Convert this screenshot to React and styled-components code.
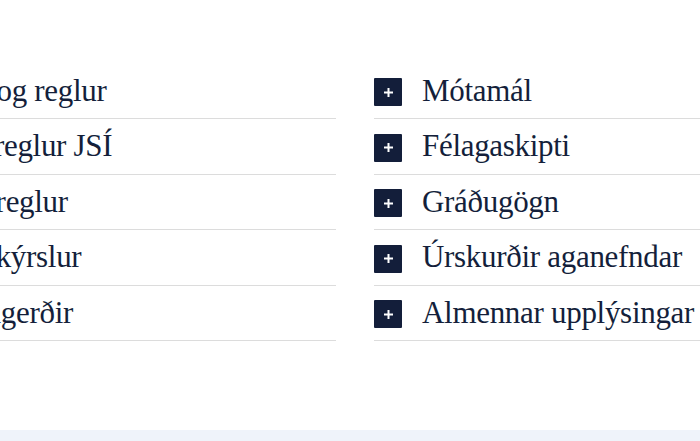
import styled, { createGlobalStyle } from 'styled-components';

const GlobalStyle = createGlobalStyle`
  html, body {
    margin: 0;
    padding: 0;
    background: #ffffff;
    overflow: hidden;
  }
  body {
    font-family: "Liberation Serif", "Times New Roman", serif;
  }
`;

const leftItems = ['Lög og reglur', 'Siðareglur JSÍ', 'Gólfreglur', 'Ársskýrslur', 'Lagagerðir'];
const rightItems = ['Mótamál', 'Félagaskipti', 'Gráðugögn', 'Úrskurðir aganefndar', 'Almennar upplýsingar'];

export default function App() {
  return (
    <>
      <GlobalStyle />
      <Page>
        <Section>
          <Columns>
            <Column items={leftItems} />
            <Column items={rightItems} />
          </Columns>
        </Section>
        <Footer />
      </Page>
    </>
  );
}

function Column({ items }) {
  return (
    <List>
      {items.map((label) => (
        <Row key={label}>
          <Toggle aria-label="Opna">
            <svg width="11" height="11" viewBox="0 0 11 11">
              <path d="M5.5 1v9M1 5.5h9" stroke="#ffffff" strokeWidth="2" />
            </svg>
          </Toggle>
          <Label>{label}</Label>
        </Row>
      ))}
    </List>
  );
}

const Page = styled.div`
  width: 700px;
  height: 441px;
  display: flex;
  flex-direction: column;
  overflow: hidden;
`;

const Section = styled.section`
  flex: 1;
  padding-top: 63.5px;
`;

// the two columns are wider than the window, so the left one starts off-screen
const Columns = styled.div`
  display: grid;
  grid-template-columns: 444px 444px;
  column-gap: 38px;
  margin-left: -108px;
  width: 926px;
`;

const List = styled.div`
  display: flex;
  flex-direction: column;
`;

const Row = styled.div`
  display: flex;
  align-items: flex-start;
  gap: 20px;
  padding: 9px 0;
  border-bottom: 1px solid #dcdcdc;
`;

const Toggle = styled.button`
  flex: none;
  width: 28px;
  height: 28px;
  margin-top: 5.5px;
  padding: 0;
  border: 0;
  border-radius: 1px;
  background: #131e3a;
  display: flex;
  align-items: center;
  justify-content: center;
  cursor: pointer;
`;

const Label = styled.span`
  font-size: 31px;
  line-height: 36.5px;
  letter-spacing: -0.3px;
  color: #141f3b;
  white-space: nowrap;
`;

const Footer = styled.div`
  flex: none;
  height: 11px;
  background: #eff3fa;
`;
